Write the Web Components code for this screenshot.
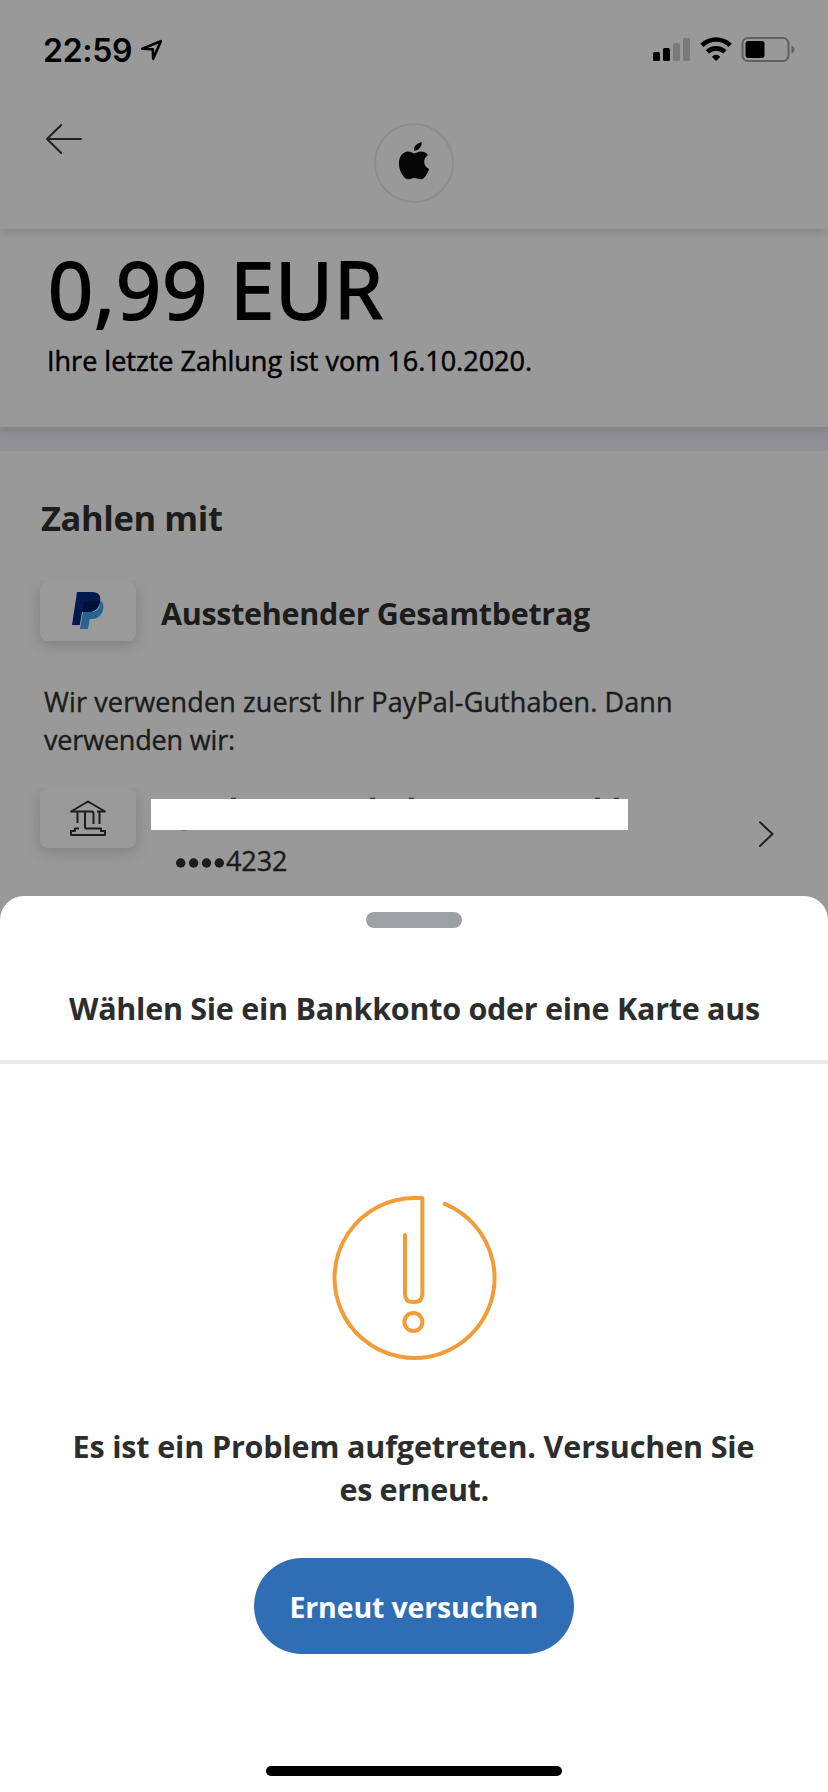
<!DOCTYPE html>
<html lang="de">
<head>
<meta charset="utf-8">
<title>Zahlen mit</title>
<style>
body{margin:0;width:828px;height:1792px;overflow:hidden;background:#999;font-family:"Open Sans","Noto Sans",sans-serif;color:#1b1c1c}
</style>
</head>
<body>
<pay-screen></pay-screen>
<script>
function define(name, html, setup){
  const t=document.createElement('template');
  t.innerHTML=html;
  customElements.define(name,class extends HTMLElement{
    constructor(){super();this.attachShadow({mode:'open'}).append(t.content.cloneNode(true));}
    connectedCallback(){if(setup)setup(this);}
  });
}

/* One line of text whose tracking is chosen so that its ink is `w` pixels wide. */
define('fit-text',`<style>
:host{display:block;white-space:pre}
span{display:inline-block}
</style><span><slot></slot></span>`,el=>{
  const cs=getComputedStyle(el),c=document.createElement('canvas').getContext('2d');
  const s=el.textContent;
  c.font=`${cs.fontWeight} ${cs.fontSize} ${cs.fontFamily}`;
  const m=c.measureText(s);
  const ink=m.actualBoundingBoxLeft+m.actualBoundingBoxRight;
  const ls=(Number(el.getAttribute('w'))-ink)/(s.length-1);
  const span=el.shadowRoot.querySelector('span');
  span.style.letterSpacing=ls.toFixed(3)+'px';
  span.style.marginLeft=m.actualBoundingBoxLeft.toFixed(2)+'px';
  span.style.marginRight=(-ls-(m.width-m.actualBoundingBoxRight)).toFixed(2)+'px';
});

define('status-bar',`<style>
:host{display:flex;justify-content:space-between;height:88px;padding:0 33px 0 44px;box-sizing:border-box;color:#000}
.l,.r{display:flex;align-items:flex-start}
fit-text{font:600 32px/38px Inter,sans-serif;margin-top:32px}
svg{display:block}
</style>
<div class="l"><fit-text w="87">22:59</fit-text>
<svg style="margin:38px 0 0 9px" width="24" height="24" viewBox="0 0 24 24"><path d="M2.3 10.8 20.8 3.2 13.2 20.8 12.8 11.2Z" fill="none" stroke="#000" stroke-width="2.6" stroke-linejoin="round"/></svg></div>
<div class="r"><svg style="margin-top:34px" width="142" height="32" viewBox="652 34 142 32">
<rect x="652" y="52" width="7" height="9" rx="1.5"/><rect x="662" y="48" width="7" height="13" rx="1.5"/>
<rect x="672" y="43" width="7" height="18" rx="1.5" fill="#7a7a7a"/><rect x="682" y="38" width="7" height="23" rx="1.5" fill="#7a7a7a"/>
<g fill="none" stroke="#000" stroke-width="4.7"><path d="M701 45.3a20 20 0 0 1 28.2 0"/><path d="M706.4 51.9a12.5 12.5 0 0 1 17.4 0"/></g>
<path d="M715.1 61 710.9 56.7Q715.1 52.7 719.3 56.7Z"/>
<rect x="741.5" y="38" width="46" height="23" rx="5.5" fill="none" stroke="#606060" stroke-width="2"/>
<rect x="744.5" y="41" width="19" height="17" rx="3"/><path d="M790.5 45.5c3.8 1.5 3.8 6.5 0 8Z" fill="#606060"/>
</svg></div>`);

define('top-header',`<style>
:host{display:block;height:229px;background:#999;position:relative;z-index:1;box-shadow:0 6px 8px -2px rgba(0,0,0,.13)}
.bar{display:grid;grid-template-columns:1fr 80px 1fr;align-items:start;padding:35px 45px 0}
.m{box-sizing:border-box;width:80px;height:80px;border:2px solid #8b8e8f;border-radius:50%;display:flex;align-items:center;justify-content:center}
svg{display:block}
</style>
<status-bar></status-bar>
<div class="bar"><svg width="38" height="32" viewBox="0 0 38 32"><path d="M16.2 2 2 16 16.2 30M2 16H36" fill="none" stroke="#202121" stroke-width="2" stroke-linecap="round" stroke-linejoin="round"/></svg>
<div class="m"><svg style="margin-top:-5px" width="32" height="38" viewBox="0 0 32 38" fill="#070707"><path d="M16.3 11.4C18 11.1 20 9.3 23.2 9.4 26 9.5 28.6 10.8 30 13 24.4 16.4 25.3 24.6 31.1 26.9 29.6 31.5 26.7 36.8 23.2 37.2 20.6 37.5 19.5 36 16.6 36 13.7 36 12.4 37.4 10.1 37.3 6.2 37.1.9 29.2.9 21.7.9 14 5.2 9.7 10 9.5 12.7 9.4 14.9 11.3 16.3 11.4Z"/><path d="M15.9 8.7C15.5 4.5 19.3.7 23.7.3 24.1 4.8 20.1 9 15.9 8.7Z"/></svg></div></div>`);

define('amount-summary',`<style>
:host{display:block;box-sizing:border-box;height:198px;padding:15px 50px 0;color:#000;box-shadow:0 3px 7px rgba(0,0,0,.13);background:#999}
.a{font-size:79px;line-height:90px;margin-left:1px;-webkit-text-stroke:2px #000}
.b{font-size:27px;line-height:36px;margin:9px 0 0 -1px;-webkit-text-stroke:.5px #000}
</style><fit-text class="a" w="331">0,99 EUR</fit-text><fit-text class="b" w="482">Ihre letzte Zahlung ist vom 16.10.2020.</fit-text>`);

define('source-card',`<style>
:host{display:block;flex:none;width:96px;height:100px;margin:0 -30px -40px;padding:0 30px;overflow:hidden}
div{width:96px;height:60px;border-radius:8px;background:#9a9a9a;box-shadow:0 4px 14px rgba(0,0,0,.17);display:flex;align-items:center;justify-content:center}
</style><div><slot></slot></div>`);

define('funding-section',`<style>
:host{display:block;background:#999;padding:44px 40px 0;height:420px}
h2{margin:0 0 40px 1px;font-size:34.5px;line-height:46px;font-weight:700}
.row{display:flex;height:60px;align-items:flex-start}
.t{margin:12px 0 0 25px;font-size:30.5px;line-height:40px;font-weight:700}
.p{margin:42px 0 29px 4px;font-size:27px;line-height:38px;-webkit-text-stroke:.4px #1b1c1c}
.c{margin:11px 0 0 15px;width:477px}
.hide{height:31px;background:#fff;position:relative}
.hide svg{position:absolute;left:0;top:-2px;overflow:visible}
.n{display:flex;align-items:center;gap:2px;margin:16px 0 0 25px;font-size:27px;line-height:30px;-webkit-text-stroke:.4px #1b1c1c}
.n svg{margin-top:4px}
svg{display:block}
.ch{margin:32px 13px 0 auto}
</style>
<h2><fit-text w="181">Zahlen mit</fit-text></h2>
<div class="row"><source-card><svg width="34" height="40" viewBox="0 0 34 40"><path d="M14 21H21C27 21 30 15 29.2 9.5 32 11 33.2 14.5 32 19 30.3 25.3 26 28 21 28H18.8L17 38H9L12 21Z" fill="#25648f"/><path d="M6 1H21C27.5 1 30.4 4.6 29 10.5 27.5 18 23.5 21 17 21H11L8.8 34H1Z" fill="#001a4f"/><path d="M13 10H29.1C27.9 17.8 23.6 21 17 21H11Z" fill="#00113b"/></svg></source-card>
<fit-text class="t" w="429">Ausstehender Gesamtbetrag</fit-text></div>
<div class="p"><fit-text w="627">Wir verwenden zuerst Ihr PayPal-Guthaben. Dann</fit-text><fit-text w="190">verwenden wir:</fit-text></div>
<div class="row"><source-card><svg width="38" height="38" viewBox="0 0 38 38"><path d="M8.5 24V12.5H2L19 2.5 36 12.5H30.5V25M8.5 12.5H22.5Q24.5 12.5 24.5 14.5V25M30.5 12.5H28M16 12.5V28Q16 29.5 17.5 29.5H32V32H36V36H2V32H6V29.5H10" fill="none" stroke="#1b1c1c" stroke-width="2" stroke-linejoin="round"/></svg></source-card>
<div class="c"><div class="hide"><svg width="477" height="35" fill="#3a3a3a"><path d="M80 .8h5v1.2h-5ZM219 .8h5v1.2h-5ZM258 .8h5v1.2h-5ZM444 .8h5v1.2h-5ZM463 .8h5v1.2h-5Z"/><path d="M30 33h6l-1 .8h-4Z" fill="#777"/></svg></div>
<div class="n"><svg width="48" height="10" fill="#1b1c1c"><circle cx="4.7" cy="5" r="4.7"/><circle cx="17.6" cy="5" r="4.7"/><circle cx="30.5" cy="5" r="4.7"/><circle cx="43.3" cy="5" r="4.7"/></svg><fit-text w="60">4232</fit-text></div></div>
<svg class="ch" width="18" height="28" viewBox="0 0 18 28"><path d="M3 2.2 15.5 14 3 26" fill="none" stroke="#202121" stroke-width="2" stroke-linecap="round" stroke-linejoin="round"/></svg></div>`);

define('alert-icon',`<style>:host{display:block;width:168px;height:168px}svg{display:block}</style>
<svg width="168" height="168" viewBox="0 0 168 168" fill="none" stroke="#f29c38" stroke-width="4" stroke-linecap="round" stroke-linejoin="round"><path d="M114.7 9.9A80 80 0 1 1 84 4H92.3V100Q92.3 108 84.3 108H83Q75 108 75 100V41"/><circle cx="83.4" cy="128" r="9"/></svg>`);

define('pill-button',`<style>
:host{display:block}
button{all:unset;box-sizing:border-box;display:flex;align-items:center;justify-content:center;width:320px;height:96px;padding-top:2px;border-radius:48px;background:#2f6eb5;color:#fff;font-size:28.5px;font-weight:700;line-height:40px}
</style><button><slot></slot></button>`);

define('bottom-sheet',`<style>
:host{display:flex;flex-direction:column;align-items:center;box-sizing:border-box;position:absolute;left:0;top:896px;width:828px;height:896px;padding-top:16px;background:#fff;border-radius:24px 24px 0 0;color:#2c2e2e}
.g{width:96px;height:16px;border-radius:8px;background:#9da2a5}
.t{font-size:30.5px;line-height:42px;font-weight:700;margin-top:59px}
hr{margin:31px 0 0;border:0;height:4px;width:100%;background:#ebebeb}
alert-icon{margin-top:130px}
.m{display:flex;flex-direction:column;align-items:center;margin-top:63px;font-size:30.5px;line-height:43px;font-weight:700}
pill-button{margin-top:47px}
.h{width:296px;height:10px;border-radius:5px;background:#000;margin-top:112px}
</style>
<div class="g"></div>
<fit-text class="t" w="690">Wählen Sie ein Bankkonto oder eine Karte aus</fit-text>
<hr>
<alert-icon></alert-icon>
<div class="m"><fit-text w="679">Es ist ein Problem aufgetreten. Versuchen Sie</fit-text><fit-text w="147">es erneut.</fit-text></div>
<pill-button><fit-text w="245">Erneut versuchen</fit-text></pill-button>
<div class="h"></div>`);

define('pay-screen',`<style>
:host{display:flex;flex-direction:column;position:relative;width:828px;height:1792px;background:#909094;overflow:hidden}
top-header,amount-summary,funding-section{flex:none}
funding-section{margin-top:24px}
</style><top-header></top-header><amount-summary></amount-summary><funding-section></funding-section><bottom-sheet></bottom-sheet>`);
</script>
</body>
</html>
